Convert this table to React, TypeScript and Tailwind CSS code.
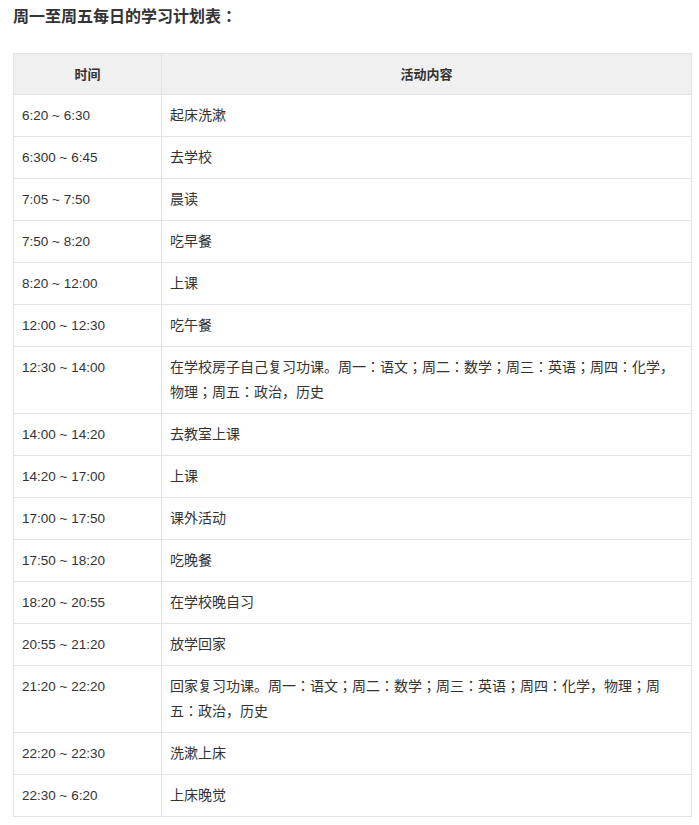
const rows: [string, string][] = [
  ["6:20 ~ 6:30", "起床洗漱"],
  ["6:300 ~ 6:45", "去学校"],
  ["7:05 ~ 7:50", "晨读"],
  ["7:50 ~ 8:20", "吃早餐"],
  ["8:20 ~ 12:00", "上课"],
  ["12:00 ~ 12:30", "吃午餐"],
  ["12:30 ~ 14:00", "在学校房子自己复习功课。周一：语文；周二：数学；周三：英语；周四：化学，物理；周五：政治，历史"],
  ["14:00 ~ 14:20", "去教室上课"],
  ["14:20 ~ 17:00", "上课"],
  ["17:00 ~ 17:50", "课外活动"],
  ["17:50 ~ 18:20", "吃晚餐"],
  ["18:20 ~ 20:55", "在学校晚自习"],
  ["20:55 ~ 21:20", "放学回家"],
  ["21:20 ~ 22:20", "回家复习功课。周一：语文；周二：数学；周三：英语；周四：化学，物理；周五：政治，历史"],
  ["22:20 ~ 22:30", "洗漱上床"],
  ["22:30 ~ 6:20", "上床晚觉"],
];

export default function App() {
  return (
    <div className="bg-white px-[13px] pt-[4px] font-['Liberation_Sans','Noto_Sans_CJK_JP',sans-serif] text-[#333]">
      <h2 className="text-[16px] font-bold leading-[26px]">周一至周五每日的学习计划表：</h2>
      <table className="mt-[23px] w-[679px] border-collapse text-[14px] leading-[25px]">
        <thead>
          <tr className="bg-[#f0f0f0]">
            <th className="w-[148px] border border-[#e3e3e3] px-2 py-[7.5px] text-center text-[13px] font-bold">时间</th>
            <th className="border border-[#e3e3e3] px-2 py-[7.5px] text-center text-[13px] font-bold">活动内容</th>
          </tr>
        </thead>
        <tbody>
          {rows.map(([t, a], i) => (
            <tr key={i}>
              <td className="border border-[#e3e3e3] px-2 py-2 align-top text-[13.5px]">{t}</td>
              <td className="border border-[#e3e3e3] px-2 py-2 align-top">{a}</td>
            </tr>
          ))}
        </tbody>
      </table>
    </div>
  );
}
